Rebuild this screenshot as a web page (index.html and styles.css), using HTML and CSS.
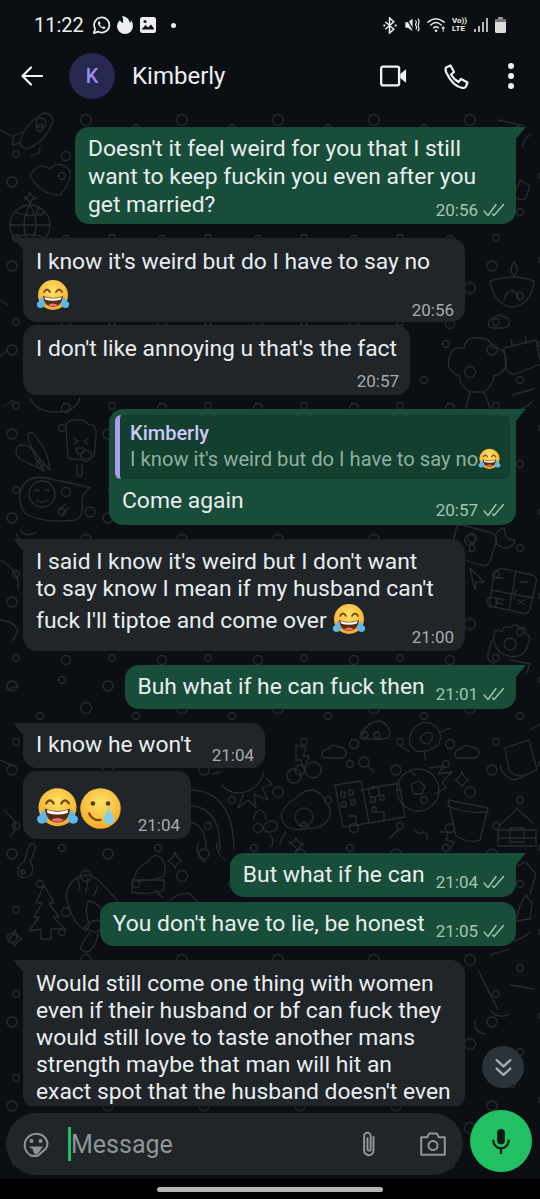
FILE: index.html
```html
<!DOCTYPE html>
<html lang="en">
<head>
    <meta charset="UTF-8">
    <meta name="viewport" content="width=device-width, initial-scale=1.0">
    <title>Kimberly</title>
    <link rel="stylesheet" href="styles.css">
</head>
<body>
    <svg class="defs" width="0" height="0">
        <defs>
            <radialGradient id="face" cx="50%" cy="35%" r="70%">
                <stop offset="0" stop-color="#fde36a"/>
                <stop offset="1" stop-color="#f5a623"/>
            </radialGradient>
            <symbol id="joy" viewBox="0 0 34 34">
                <circle cx="17" cy="16" r="15" fill="url(#face)"/>
                <path d="M8 13q3-5 6 0M20 13q3-5 6 0" fill="none" stroke="#7a4a12" stroke-width="1.8" stroke-linecap="round"/>
                <path d="M7 17q10 4 20 0q-1 11-10 11t-10-11z" fill="#5b2c12"/>
                <path d="M8.500 18q8.500 3 17 0l-.6 2.500q-8 2.500-15.800 0z" fill="#fff"/>
                <path d="M12 26q5-3 10 0q-5 3-10 0z" fill="#e8707a"/>
                <path d="M6 17q-1 4-5 7q-1 5 4 5q5-1 4-5q-2-3-3-7zM28 17q1 4 5 7q1 5-4 5q-5-1-4-5q2-3 3-7z" fill="#5cb8e8"/>
            </symbol>
            <symbol id="tear" viewBox="0 0 34 34">
                <circle cx="17" cy="17" r="16" fill="url(#face)"/>
                <circle cx="11" cy="13" r="1.800" fill="#5b3a10"/>
                <circle cx="23" cy="13" r="1.800" fill="#5b3a10"/>
                <path d="M8 21q3 6 9 5" fill="none" stroke="#7a4a12" stroke-width="1.800" stroke-linecap="round"/>
                <path d="M23.500 15q-1 5-3.500 8q-1.500 6 3.500 6.500q5-.5 3.500-6.500q-2.500-3-3.500-8z" fill="#7fd0ec"/>
            </symbol>
            <symbol id="ticks" viewBox="0 0 22 14">
                <path d="M1 8l4 4.500L13 1.500M9.500 11l1.500 1.500L20.500 1.500" fill="none" stroke="currentColor" stroke-width="1.400" stroke-linecap="round" stroke-linejoin="round"/>
            </symbol>
            <pattern id="specks" width="96" height="84" patternUnits="userSpaceOnUse">
                <g fill="none" stroke="#242a2d" stroke-width="1.300">
                    <circle cx="12" cy="14" r="5"/><circle cx="62" cy="8" r="3.500"/><circle cx="40" cy="44" r="3.500"/>
                    <circle cx="86" cy="36" r="5.500"/><circle cx="16" cy="70" r="3.500"/><circle cx="66" cy="72" r="4.500"/>
                </g>
            </pattern>
        </defs>
    </svg>

    <div class="phone">
        <div class="status">
            <div class="status-left">
                <span class="clock">11:22</span>
                <svg class="st-wa" viewBox="0 0 20 20"><path d="M2 18l1.300-4.600a8 8 0 1 1 3 3z" fill="none" stroke="#eee" stroke-width="1.800" stroke-linejoin="round"/><path d="M7 5.500q-1.500 1.500-.5 3.500q2 3.500 5 4.500q2 .5 3-1.300l-2.300-1.300l-1 1q-2-1-3-3l.8-1l-1-2.400z" fill="#eee"/></svg>
                <svg class="st-flame" viewBox="0 0 16 18"><path d="M6 7q1-4-1-7q7 1 8 7q1-1 1-3q2 3 2 6a8 8 0 0 1-16 0q0-3 3-6q0 2 3 3z" fill="#eee"/></svg>
                <svg class="st-img" viewBox="0 0 16 16"><rect width="16" height="16" rx="2.500" fill="#eee"/><path d="M2 12l3.500-4l2.500 2.500l3-3l3 4v1H2z" fill="#0b0f13"/><circle cx="5" cy="4.500" r="1.500" fill="#0b0f13"/></svg>
                <span class="st-dot"></span>
            </div>
            <div class="status-right">
                <svg class="st-bt" viewBox="0 0 14 18"><path d="M2 5l9 8l-4.500 4V1L11 5l-9 8" fill="none" stroke="#eee" stroke-width="1.600"/><path d="M0 9h2M12 9h2" stroke="#eee" stroke-width="2"/></svg>
                <svg class="st-mute" viewBox="0 0 16 18"><path d="M0 6h3l5-4v14l-5-4H0z" fill="#eee"/><path d="M1 1l9 16" stroke="#0b0f13" stroke-width="1.500"/><path d="M11 4q2 1 1 3t0 3t0 4M14 2q2 2 1 5t0 5t-1 4" fill="none" stroke="#eee" stroke-width="1.300"/></svg>
                <svg class="st-wifi" viewBox="0 0 21 16"><path d="M1 5q8-7 17 0M4 8q5-5 11 0M7 11q3-2.500 5 0" fill="none" stroke="#eee" stroke-width="1.500" stroke-linecap="round"/><circle cx="9.500" cy="14" r="1.300" fill="#eee"/><path d="M17 15v-5M15.500 11.500l1.500-1.500l1.500 1.500" fill="none" stroke="#eee" stroke-width="1.100"/></svg>
                <div class="volte"><span>Vo))</span><span>LTE</span></div>
                <svg class="st-signal" viewBox="0 0 14 16"><path d="M1 12v3M5 9v6M9 5v10M13 1v14" stroke="#eee" stroke-width="1.500"/></svg>
                <svg class="st-batt" viewBox="0 0 11 16"><rect y="2" width="11" height="14" rx="1.500" fill="#ddd"/><rect x="3" width="5" height="2" fill="#999"/><rect x="0" y="2" width="11" height="3" rx="1" fill="#777"/></svg>
            </div>
        </div>

        <header class="topbar">
            <svg class="back" viewBox="0 0 22 20"><path d="M21 10H2M10 1.500L1.500 10l8.500 8.500" fill="none" stroke="#f2f2f2" stroke-width="2.200" stroke-linecap="round" stroke-linejoin="round"/></svg>
            <div class="avatar">K</div>
            <div class="name">Kimberly</div>
            <svg class="ic-video" viewBox="0 0 28 22"><rect x="1.200" y="1.200" width="18.600" height="19.600" rx="2" fill="none" stroke="#f2f2f2" stroke-width="2.400"/><path d="M21 9l6-5v14l-6-5z" fill="#f2f2f2"/></svg>
            <svg class="ic-phone" viewBox="0 0 25 25"><path d="M2 3.500L6.500 1.500l3.500 6.500l-3 2.500q3 5 7.500 7.500l2.500-3l6.500 3.500l-1.500 4q-1 1.500-3 1.500Q9 23 2 8q-.8-3 0-4.500z" fill="none" stroke="#f2f2f2" stroke-width="2.200" stroke-linejoin="round"/></svg>
            <div class="dots"><i></i><i></i><i></i></div>
        </header>

        <main class="chat">
            <svg class="wallpaper" width="540" height="1069" viewBox="0 110 540 1069">
                <rect y="110" width="540" height="1069" fill="url(#specks)"/>
                <g fill="none" stroke="#262c2f" stroke-width="1.300" stroke-linecap="round" stroke-linejoin="round">
                    <!-- top left: rocket, heart, star, globe -->
                    <path d="M20 145q2-20 24-32q8 0 9 8q-8 22-27 28zM22 132l-8 4l-2 9l8-2M40 148l-1 5l-9 3"/><circle cx="41" cy="123" r="5"/>
                    <path d="M30 175q10-14 20-6q10-10 20 2q2 10-10 24q-20 0-30-20z"/>
                    <path d="M30 192q1 5 6 6q-5 1-6 6q-1-5-6-6q5-1 6-6z"/>
                    <circle cx="30" cy="225" r="20"/><path d="M10 225h40M30 205q-12 20 0 40M30 205q12 20 0 40M15 212q15 7 30 0M15 238q15-7 30 0"/>
                    <!-- right side: diya, cloud, calendar, broccoli -->
                    <path d="M490 281q22-8 44 0q-3 24-22 26q-18-2-22-26zM514 262q-6 8 0 14q6-6 0-14zM504 300q2-8 5-8q3-4 5 0q3 0 5 8"/>
                    <path d="M489 326q-2-7 5-8q4-5 9-1q7 0 6 7q-1 4-6 4h-10q-4 0-4-2z"/>
                    <path d="M504 348l32-8l5 24l-26 10q-8 0-9-6zM512 345l-1-6M526 342l-1-6"/>
                    <path d="M470 392q-12-8-10-16q-16-6-10-20q2-10 14-8q2-12 14-10q14 0 14 10q12-2 14 10q2 14-12 18q0 8-10 16zM470 392l-4 16M484 392l6 16"/>
                    <path d="M512 395l22-6M508 410q14 2 24-8"/>
                    <!-- left of the reply: pizza, chilli, ice lolly, smiley -->
                    <path d="M30 398q6 14 26 14q20 0 24-14"/>
                    <path d="M20 445q-8 6 0 14l24 12q-2-6-8-12q-2-8-6-12q-4-2-10-2zM30 432q-4 4 0 12q6 12 18 24l2 2q-2-20-12-30q-2-6-8-8z"/>
                    <path d="M66 428q0-8 8-8q8-1 12 2q2 4 5 2q6 2 5 12l-2 20q-10 6-26 2z"/><path d="M77 465v10q5 4 5-2v-9M74 438l4 3l-4 3M88 438l-4 3l4 3M76 448h8q0 6-4 6t-4-6z"/>
                    <path d="M20 492q6-18 26-14l38 8l6 2q-8 6-8 14q2 14-6 18q-30 4-50-6q-8-10-6-22z"/><circle cx="42" cy="494" r="13"/><path d="M35 491q2-2 4 0M45 491q2-2 4 0M36 500q6 4 12 0"/>
                    <path d="M58 510l8-6M62 514l7-6"/><circle cx="90" cy="512" r="5"/>
                    <path d="M20 530q6 8 16 2"/>
                    <!-- keyhole tile, moon, arrow, calculator, paw -->
                    <path d="M462 525l30 8q6 2 4 10l-6 18q-2 6-10 4l-24-8q-6-2-4-8l4-20q2-5 6-4z"/><circle cx="472" cy="538" r="4.500"/><path d="M471 542l-2 9h6l-2-9"/>
                    <path d="M505 528a10 10 0 1 0 10 12a9 9 0 0 1-10-12z"/>
                    <path d="M470 568l14 14l-8 0l-1 8z"/>
                    <path d="M494 575q3-8 10-6l28 6q6 2 4 8l-6 26q-2 6-8 4l-28-6q-6-2-4-8zM491 590l42 8M516 572l-7 38M496 578h8M520 582h8M516 590l-2 8M518 600l6 4M524 600l-6 4M496 598l8 2M495 602l8 2"/>
                    <path d="M500 652q-8-8-6-18q2-6 8-2q2-8 8-4q6-6 10 0q6-2 6 6q6 2 2 10q-2 10-10 12q-10 2-18-4z"/><path d="M492 640l-4 14q-2 6 6 10"/>
                    <circle cx="510" cy="644" r="6"/>
                    <!-- middle: sun, lightning, clouds, glasses, egg, flats, ball -->
                    <path d="M222 785q10 12 26 6q14-6 16-20M220 772l-8 2M244 792l-6 16l10-8l8 8l-2-14l14 6l-6-12l10-4l-6-6"/>
                    <path d="M296 745l10 3l-3 8l6 0l-5 14l-3-10l-5 0z"/>
                    <path d="M322 756q-1-7 6-7q4-6 10-2q8 0 8 7q-1 4-6 4h-14q-4 0-4-2z"/>
                    <path d="M455 756q-1-7 6-7q4-6 10-2q8 0 8 7q-1 4-6 4h-14q-4 0-4-2z"/>
                    <path d="M360 735q8-14 20-14q8 2 10 12q0 6-8 6h-18q-5 0-4-4z"/><circle cx="365" cy="735" r="3"/><circle cx="377" cy="735" r="3"/>
                    <circle cx="364" cy="762" r="5"/><path d="M368 766l6 6"/>
                    <circle cx="294" cy="776" r="7"/><circle cx="313" cy="770" r="8"/><path d="M300 774l6-2"/>
                    <path d="M282 812q4-8 14-14q8-8 16-8q10 2 14 12q8 10 2 18q-8 10-20 8q-12 4-22-2q-6-6-4-14z"/><circle cx="304" cy="817" r="9"/>
                    <path d="M335 785l26-4l8 42l-26 4zM361 790l38-7l6 34l-36 6M341 792h4v5h-4zM349 790h4v5h-4zM342 802h4v5h-4zM351 800h4v5h-4zM371 797h4v5h-4zM380 795h4v5h-4zM372 807h4v5h-4zM349 816h7v10M376 812h8v10"/>
                    <circle cx="418" cy="790" r="21"/><path d="M411 784l8-3l6 5l-3 8h-8zM430 768l14-2l-6 8l14-2l-10 10l4 6l-12 6M410 771l5 4M396 790l6 0"/>
                    <path d="M462 772q2 6 7 8q-5 2-7 7q-2-5-7-7q5-2 7-8z"/>
                    <path d="M448 800l40 8l-8 32q-10 4-24-4zM448 806q18 8 40 6"/>
                    <path d="M410 745q-2-14 8-20q10-6 18 2q8 8 2 18q-10 8-22 6zM400 746l10 6M440 732l10-4M424 752l2 8"/><path d="M420 738q6-8 12-4q2 6-4 10q-6 0-8-6z"/>
                    <path d="M505 748l24-8l8 30l-14 6q-10 0-14-6zM500 766q2 10 14 14q10-2 12-6"/>
                    <path d="M500 825l17-16l16 14M498 830h38v8h-38zM498 838h38v8h-38zM498 846h38M510 828h14v14h-14z"/>
                    <path d="M286 832q-6 8-6 12M276 822q2 4 0 8q-8 4-12 0q-2-6 4-8q4-2 8 0zM266 820q0-8-6-10q-6 2-6 10M270 835q6 6 0 12"/>
                    <path d="M190 790q30 0 40 30q4 14 4 30M190 806q20 0 28 22q2 10 2 22M190 822q10 2 14 12q2 8 2 16"/>
                    <path d="M288 842q6 2 8-4q2 6 8 6q-6 2-6 8q-2-6-10-10z"/>
                    <path d="M390 838l8-8M415 830q4 6 8 2q6 2 4 8M440 832l8 0l-2 8l8 2l-4 8"/>
                    <!-- bottom left: key, tree, prawn, hat, star, mushroom -->
                    <path d="M28 848q4-8 8-2q-2 8-6 16q6 8 0 14q-8 4-12-2q-2-8 6-12q2-6 4-14z"/><circle cx="23" cy="872" r="2"/>
                    <path d="M44 885l10 18l-5 0l10 14l-6 0l12 12h-14v10h-10v-10l-12 2l10-14l-5 0l8-14l-6 0z"/>
                    <path d="M66 895q4-20 24-20q12 6 20 18q14 12 12 26q-10 0-20-10q-8-8-14-8q-4 14 2 24l-4 6q-16-10-20-36z"/><path d="M78 878l2 12M88 878l-2 14M98 886l-4 10"/>
                    <path d="M134 880q2-14 14-18q4-8 10-6q10 6 6 20q-14 6-30 4zM132 880h32v10q-16 6-32 2z"/>
                    <path d="M175 852q2 7 7 9q-5 2-7 7q-2-5-7-7q5-2 7-9z"/>
                    <path d="M84 928q6-8 14-8l4 4q0 8-8 8zM90 932l-8 12q-4 6 4 8q6 0 10-10l2-8"/>
                    <path d="M15 930q2 7 7 9q-5 2-7 7q-2-5-7-7q5-2 7-9z"/>
                    <path d="M205 862q-12-10-6-20M225 860q-10-8-8-18"/>
                    <path d="M155 890l8 8M170 900q10-8 20-6l8 8"/>
                    <!-- far right strip under the last bubbles -->
                    <path d="M506 870l20-8l10 12l-6 20M520 905l6-10l6 8l-2 16l-14 2zM490 955l20-6M478 970l20 40M490 1010q8 10 20 4M510 985l24 4M500 940q18 4 30-8"/>
                    <path d="M520 180l10 6l-4 12q-6 4-12-2zM498 120l18 4q6 4 0 12M530 135q-6 4-8 12M480 215l12 8"/>
                    <path d="M510 660l20 4l-4 10M470 690q-2-6 4-8l14 0M530 730l10-6"/>
                    <path d="M475 1020q-2 12 10 14M500 1060l20 10l-6 18l-18-6z"/>
                    <path d="M0 560q20 10 18 30M0 620q12 0 18 10l-6 12M6 690l12-4M0 760l14 6M4 810l10 10q4 10-4 16"/>
                    <path d="M0 300l8 6M8 350l-8 6M0 130l12 6M14 400l-10 6"/>
                    <path d="M24 540q-6 0-8-6"/>
                </g>
            </svg>

            <div class="messages">
                <div class="msg out tail stack wide first">
                    <div class="text">Doesn't it feel weird for you that I still<br>want to keep fuckin you even after you<br>get married?</div>
                    <div class="meta over">20:56 <svg class="tk"><use href="#ticks"/></svg></div>
                </div>

                <div class="msg in tail stack wide emo-line">
                    <div class="text">I know it's weird but do I have to say no<br><svg class="emo"><use href="#joy"/></svg></div>
                    <div class="meta">20:56</div>
                </div>

                <div class="msg in stack">
                    <div class="text">I don't like annoying u that's the fact</div>
                    <div class="meta">20:57</div>
                </div>

                <div class="msg out tail reply">
                    <div class="quote">
                        <div class="quote-name">Kimberly</div>
                        <div class="quote-text">I know it's weird but do I have to say no<svg class="emo-s"><use href="#joy"/></svg></div>
                    </div>
                    <div class="reply-row">
                        <div class="text">Come again</div>
                        <div class="meta">20:57 <svg class="tk"><use href="#ticks"/></svg></div>
                    </div>
                </div>

                <div class="msg in tail stack wide emo-end">
                    <div class="text">I said I know it's weird but I don't want<br>to say know I mean if my husband can't<br>fuck I'll tiptoe and come over <svg class="emo"><use href="#joy"/></svg></div>
                    <div class="meta">21:00</div>
                </div>

                <div class="msg out tail line">
                    <div class="text">Buh what if he can fuck then</div>
                    <div class="meta">21:01 <svg class="tk"><use href="#ticks"/></svg></div>
                </div>

                <div class="msg in tail line short">
                    <div class="text">I know he won't</div>
                    <div class="meta">21:04</div>
                </div>

                <div class="msg in line emoji-only">
                    <div class="text"><svg class="emo big"><use href="#joy"/></svg><svg class="emo big"><use href="#tear"/></svg></div>
                    <div class="meta">21:04</div>
                </div>

                <div class="msg out tail line">
                    <div class="text">But what if he can</div>
                    <div class="meta">21:04 <svg class="tk"><use href="#ticks"/></svg></div>
                </div>

                <div class="msg out line">
                    <div class="text">You don't have to lie, be honest</div>
                    <div class="meta">21:05 <svg class="tk"><use href="#ticks"/></svg></div>
                </div>

                <div class="msg in tail stack wide">
                    <div class="text">Would still come one thing with women<br>even if their husband or bf can fuck they<br>would still love to taste another mans<br>strength maybe that man will hit an<br>exact spot that the husband doesn't even</div>
                </div>
            </div>

            <button class="scroll-down">
                <svg viewBox="0 0 16 18"><path d="M1.500 2l6.500 6l6.500-6M1.500 10l6.500 6l6.500-6" fill="none" stroke="#a3acb1" stroke-width="2.200" stroke-linecap="round" stroke-linejoin="round"/></svg>
            </button>

            <div class="composer">
                <div class="input">
                    <svg class="ic-sticker" viewBox="0 0 26 26"><path d="M8 24.500A11.500 11.500 0 1 1 24.500 12q0 3-1.500 5.500L15 24.500q-3.500 1-7 0z" fill="none" stroke="#8d9599" stroke-width="2"/><circle cx="8.500" cy="10" r="2" fill="#8d9599"/><circle cx="17.500" cy="10" r="2" fill="#8d9599"/><path d="M6 15.500h14l-5 7q-1 1-3 1q-2-3-2-5z" fill="#8d9599"/></svg>
                    <span class="caret"></span>
                    <span class="placeholder">Message</span>
                    <svg class="ic-clip" viewBox="0 0 18 28"><path d="M13.500 7v13.500a4.700 4.700 0 0 1-9.400 0V6a3.300 3.300 0 0 1 6.600 0v13a1.600 1.600 0 0 1-3.200 0V8" fill="none" stroke="#8d9599" stroke-width="2" stroke-linecap="round"/></svg>
                    <svg class="ic-cam" viewBox="0 0 26 24"><path d="M1.200 5.200h6l2-3.800h7.600l2 3.800h6v17.600H1.200z" fill="none" stroke="#8d9599" stroke-width="2" stroke-linejoin="round"/><circle cx="13" cy="13.500" r="4.500" fill="none" stroke="#8d9599" stroke-width="2"/></svg>
                </div>
                <button class="mic">
                    <svg viewBox="0 0 20 28"><rect x="6" y="1" width="8" height="16" rx="4" fill="#0b1a12"/><path d="M2 13a8 8 0 0 0 16 0" fill="none" stroke="#0b1a12" stroke-width="2.200" stroke-linecap="round"/><path d="M10 21v6" stroke="#0b1a12" stroke-width="2.400"/></svg>
                </button>
            </div>
        </main>

        <div class="navbar"><span class="pill"></span></div>
    </div>
</body>
</html>
```

FILE: styles.css
```css
*{
    margin:0;
    padding:0;
    box-sizing:border-box;
}
html,body{
    background:#000;
}
body{
    font-family:Roboto,"Noto Sans",sans-serif;
    color:#e9edef;
    overflow:hidden;
}
.defs{
    position:absolute;
}
.phone{
    width:540px;
    height:1199px;
    display:flex;
    flex-direction:column;
    background:#0b0f13;
}

/* status bar */
.status{
    height:50px;
    padding:0 34px;
    display:flex;
    justify-content:space-between;
    align-items:center;
    flex-shrink:0;
}
.status-left,.status-right{
    display:flex;
    align-items:center;
}
.clock{
    font-size:20px;
    color:#eee;
    margin-right:8px;
}
.st-wa{width:19px;height:19px;margin-right:6px;}
.st-flame{width:16px;height:18px;margin-right:7px;}
.st-img{width:16px;height:16px;margin-right:15px;}
.st-dot{
    width:5px;
    height:5px;
    border-radius:50%;
    background:#eee;
}
.st-bt{width:14px;height:17px;margin-right:8px;}
.st-mute{width:15px;height:16px;margin-right:7px;}
.st-wifi{width:20px;height:16px;margin-right:5px;}
.volte{
    display:flex;
    flex-direction:column;
    font-size:8px;
    line-height:8px;
    font-weight:700;
    color:#eee;
    margin-right:6px;
    width:16px;
}
.st-signal{width:14px;height:16px;margin-right:7px;}
.st-batt{width:11px;height:16px;}

/* header */
.topbar{
    height:60px;
    padding-bottom:8px;
    display:flex;
    align-items:center;
    flex-shrink:0;
    padding-left:21px;
}
.back{width:22px;height:20px;}
.avatar{
    width:46px;
    height:46px;
    border-radius:50%;
    background:#27284f;
    color:#9c8ff0;
    font-size:20px;
    font-weight:500;
    display:flex;
    align-items:center;
    justify-content:center;
    margin-left:26px;
}
.name{
    font-size:24px;
    color:#eef0f1;
    margin-left:17px;
    flex:1;
}
.ic-video{width:27px;height:22px;margin-right:37px;}
.ic-phone{width:25px;height:25px;margin-right:39px;}
.dots{
    display:flex;
    flex-direction:column;
    gap:4px;
    margin-right:26px;
}
.dots i{
    width:6px;
    height:6px;
    border-radius:50%;
    background:#f2f2f2;
}

/* chat */
.chat{
    flex:1;
    min-height:0;
    position:relative;
    display:flex;
    flex-direction:column;
}
.wallpaper{
    position:absolute;
    top:0;
    left:0;
}
.messages{
    flex:1;
    min-height:0;
    overflow:hidden;
    position:relative;
    display:flex;
    flex-direction:column;
    padding:17px 24px 0 23px;
}
.msg{
    position:relative;
    flex-shrink:0;
    border-radius:14px;
    margin-top:3px;
    font-size:22.850px;
    line-height:28px;
}
.msg.in{
    align-self:flex-start;
    background:#202529;
    line-height:27px;
}
.msg.out{
    align-self:flex-end;
    background:#174d39;
    margin-top:5px;
}
.msg.tail{
    margin-top:14px;
}
.msg.tail:first-child{
    margin-top:0;
}
.msg.tail.in{
    border-top-left-radius:0;
}
.msg.tail.out{
    border-top-right-radius:0;
}
.msg.tail::after{
    content:"";
    position:absolute;
    top:0;
    width:11px;
    height:13px;
    background:inherit;
}
.msg.tail.out::after{
    right:-10px;
    clip-path:polygon(0 0,100% 0,0 100%);
}
.msg.tail.in::after{
    left:-10px;
    clip-path:polygon(0 0,100% 0,100% 100%);
}
.wide{
    width:442px;
}

.text{
    white-space:nowrap;
}
.meta{
    font-size:17px;
    line-height:20px;
    color:#a7abae;
    display:flex;
    align-items:center;
    justify-content:flex-end;
    gap:5px;
    white-space:nowrap;
    flex-shrink:0;
}
.out .meta{
    color:#a3c4b3;
}
.tk{
    width:22px;
    height:14px;
}

.stack{
    display:flex;
    flex-direction:column;
    padding:10px 13px 4px;
}
.stack .meta{
    margin-top:9px;
    margin-right:-2px;
}
.first{
    width:441px;
    padding-top:8px;
}
.stack .meta.over{
    margin-top:-19px;
}
.emo-line{
    padding-bottom:2px;
}
.emo-line .emo{
    margin-top:4px;
}
.emo-line .meta{
    margin-top:-13px;
}
.emo-end{
    padding-top:9px;
}
.emo-end .emo{
    margin-top:1px;
}
.emo-end .meta{
    margin-top:-10px;
}
.line{
    display:flex;
    align-items:flex-end;
    justify-content:space-between;
    gap:11px;
    padding:8px 11px 8px 13px;
}
.line .meta{
    margin-bottom:-3px;
}
.short{
    width:242px;
    padding-bottom:10px;
}
.short .meta{
    margin-bottom:-7px;
}

.emo{
    width:34px;
    height:34px;
    vertical-align:-9px;
}
.emoji-only{
    width:168px;
    padding-top:6px;
    padding-bottom:10px;
}
.emoji-only .text{
    display:flex;
    padding-top:10px;
    height:52px;
}
.emoji-only .meta{
    margin-bottom:-6px;
}
.emo.big{
    width:43px;
    height:43px;
}
.emo-s{
    width:23px;
    height:23px;
    vertical-align:-5px;
}

/* reply bubble */
.reply{
    padding:6px 6px 10px;
    width:407px;
}
.quote{
    background:#123f2e;
    border-left:5px solid #a99cf0;
    border-radius:6px;
    padding:5px 4px 6px 10px;
    height:64px;
}
.quote-name{
    font-size:20px;
    line-height:26px;
    font-weight:500;
    color:#cfc8f8;
}
.quote-text{
    font-size:20.200px;
    line-height:26px;
    color:#8eb0a0;
    white-space:nowrap;
}
.reply-row{
    display:flex;
    justify-content:space-between;
    align-items:flex-end;
    padding:8px 5px 0 7px;
}
.reply-row .meta{
    margin-bottom:-5px;
}

.scroll-down{
    position:absolute;
    top:936px;
    right:16px;
    width:42px;
    height:42px;
    border:0;
    border-radius:50%;
    background:#2a3338;
    display:flex;
    align-items:center;
    justify-content:center;
}
.scroll-down svg{
    width:17px;
    height:19px;
}

.composer{
    display:flex;
    align-items:flex-start;
    gap:7px;
    padding:7px 8px 4px 6px;
    flex-shrink:0;
    position:relative;
}
.input{
    flex:1;
    height:62px;
    border-radius:31px;
    background:#202529;
    display:flex;
    align-items:center;
    padding:0 17px;
}
.ic-sticker{width:26px;height:26px;}
.caret{
    width:3px;
    height:34px;
    background:#21c063;
    margin-left:19px;
}
.placeholder{
    font-size:25px;
    color:#8d9599;
    flex:1;
}
.ic-clip{width:18px;height:28px;margin-right:42px;}
.ic-cam{width:26px;height:24px;}
.mic{
    width:62px;
    height:62px;
    margin-top:-3px;
    border:0;
    border-radius:50%;
    background:#21c063;
    display:flex;
    align-items:center;
    justify-content:center;
}
.mic svg{
    width:20px;
    height:27px;
}

.navbar{
    height:20px;
    background:#000;
    display:flex;
    align-items:center;
    justify-content:center;
    flex-shrink:0;
}
.pill{
    width:226px;
    height:5px;
    border-radius:3px;
    background:#b5b5b5;
}
```
